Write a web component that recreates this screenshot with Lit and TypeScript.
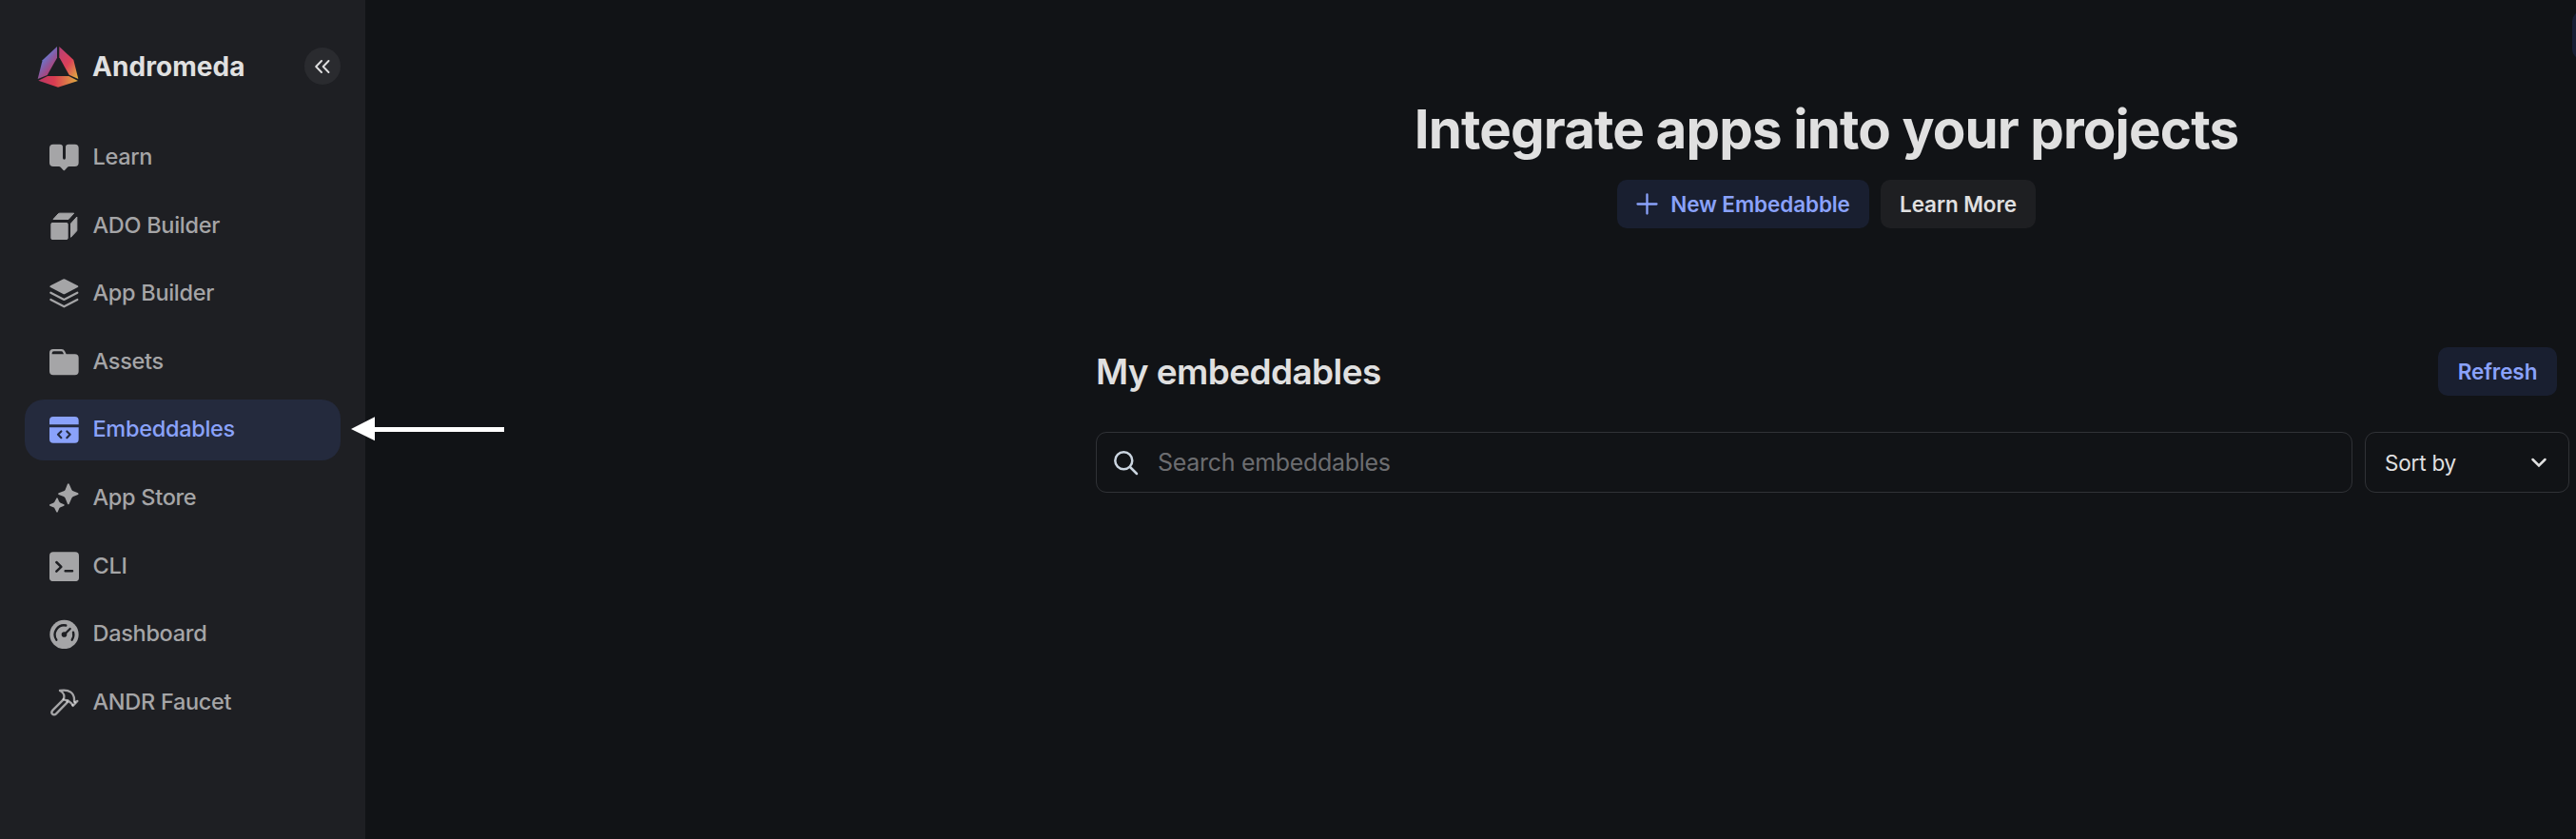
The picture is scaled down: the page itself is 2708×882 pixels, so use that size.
import { LitElement, html, css, svg } from "lit";
import { customElement } from "lit/decorators.js";

const icons = {
  learn: svg`<path fill="currentColor" d="M12 5h20q6 0 9 4q1 2 1 6v33q0 5 4.500 5t4.500-5v-33q0-4 1-6q3-4 9-4h19q12 0 12 12v46q0 12-12 12H62q-3 0-5 2l-9 10q-2 2-4 0l-9-10q-2-2-5-2H12q-12 0-12-12V17q0-12 12-12z"/>`,
  ado: svg`<g fill="currentColor" stroke="currentColor" stroke-width="3" stroke-linejoin="round"><rect x="5.500" y="37.500" width="52" height="51" rx="3"/><path d="M12 25.500 27 9q2-2.500 5-2.500h45L60 25.500zM67.500 39 86.500 18v42q0 2-2 4L67.500 82z"/></g>`,
  app: svg`<path fill="currentColor" d="M43 1.500q3-1.500 6 0L89 22q4 2.500 0 5L49 48q-3 1.500-6 0L3 27q-4-2.500 0-5z"/><path fill="none" stroke="currentColor" stroke-width="6.500" stroke-linecap="round" stroke-linejoin="round" d="m4 44 42 22 42-22M4 66l42 22 42-22"/>`,
  assets: svg`<path fill="currentColor" fill-rule="evenodd" d="M12 6h26q7 0 10 6l5 10h27q12 0 12 12v42q0 12-12 12H12Q0 88 0 76V18Q0 6 12 6zm2 7q-6 0-6 6v3h37l-2-5q-2-4-6-4z"/>`,
  embed: svg`<path fill="currentColor" fill-rule="evenodd" d="M12 6h68q12 0 12 12v13H0V18Q0 6 12 6zM0 40h92v37q0 12-12 12H12Q0 89 0 77z"/><path fill="none" stroke="#242a3d" stroke-width="6.500" stroke-linecap="round" stroke-linejoin="round" d="M37 52.500 27 62.500l10 10M55 52.500l10 10-10 10"/>`,
  store: svg`<path fill="currentColor" d="M57 2q3-3 5 0L70 20q1.500 3 5 4.500L90 31q3 2.500 0 5L75 42q-3.500 1.500-5 5L62 65q-2.500 3-5 0L50 47q-1.500-3.500-5-5L29 36q-3-2.500 0-5L45 24.500q3.500-1.500 5-4.500zM22 47q2-2 4 0L30 57q2 4 5 5L46 67q2 2 0 4L35 76q-3 1-5 5L26 91q-2 2-4 0L17 81q-1-4-5-5L1 71q-2-2 0-4L12 62q4-1 5-5z"/>`,
  cli: svg`<rect width="93" height="93" rx="12" fill="currentColor" y=".5"/><path fill="none" stroke="#1e1f23" stroke-width="7.500" stroke-linecap="round" stroke-linejoin="round" d="m22 33 15 14.500L22 62M50 61h22"/>`,
  dash: svg`<circle cx="46.500" cy="48" r="45.500" fill="currentColor"/><g fill="none" stroke="#1e1f23" stroke-width="7" stroke-linecap="round"><path d="M22 65A29.500 29.500 0 0 1 52 19.500M75 41A29.500 29.500 0 0 1 71 65M50 45 65 30"/></g><circle cx="46.500" cy="48" r="8.500" fill="#1e1f23"/>`,
  faucet: svg`<path fill="none" stroke="currentColor" stroke-width="7" stroke-linecap="round" stroke-linejoin="round" d="M33 9c29-5 47 7 45 33l3 3 7-3-14 15-4-7-12-10M33 9c14 7 15 19 11 28L11 70C1 80 13 90 21 82L56 46M44 37l14 4"/><path fill="none" stroke="#d2d2d3" stroke-width="6" stroke-linecap="round" d="M44 36v1M56 43v1M79 45l2 1M73 54v1"/>`,
};

const nav: [string, unknown][] = [
  ["Learn", icons.learn],
  ["ADO Builder", icons.ado],
  ["App Builder", icons.app],
  ["Assets", icons.assets],
  ["Embeddables", icons.embed],
  ["App Store", icons.store],
  ["CLI", icons.cli],
  ["Dashboard", icons.dash],
  ["ANDR Faucet", icons.faucet],
];

@customElement("app-root")
export class AppRoot extends LitElement {
  static styles = css`
    :host {
      display: flex;
      position: relative;
      width: 100%;
      height: 882px;
      overflow: hidden;
      background: #111316;
      color: #e0e0e0;
      font-family: Inter, sans-serif;
    }
    * { box-sizing: border-box; }
    svg { display: block; flex: none; }
    .side {
      flex: none;
      width: 384px;
      padding: 50px 26px 0;
      background: #1e1f23;
    }
    .brand { display: flex; align-items: center; height: 39px; padding-left: 13px; margin-bottom: 44.600px; }
    .name { flex: 1; margin-left: 14px; padding-top: 1px; font-size: 28px; font-weight: 700; line-height: 39px; letter-spacing: .05px; }
    .collapse {
      display: grid; place-items: center;
      width: 38.500px; height: 39px; border-radius: 50%; background: #2a2b2f;
    }
    .nav { display: flex; flex-direction: column; gap: 7.600px; }
    .item {
      display: flex; align-items: center; gap: 14.500px;
      height: 64px; padding-left: 26px; border-radius: 20px;
      color: #a5a5a7; font-size: 23.500px; font-weight: 500; letter-spacing: -.3px;
    }
    .item span { margin-top: -2px; }
    .active { background: #242a3d; color: #8aa2fb; }
    .main { flex: 1; min-width: 0; padding: 102px 20px 0 768px; }
    .title { margin: 0; height: 87px; line-height: 68px; text-align: center; font-size: 56.500px; font-weight: 700; letter-spacing: -.880px; white-space: nowrap; }
    .row { display: flex; justify-content: center; gap: 12px; }
    .btn {
      display: flex; align-items: center; justify-content: center;
      height: 51px; border-radius: 10px;
      font-size: 22.500px; font-weight: 600; letter-spacing: -.1px; white-space: nowrap;
      background: #1e1f22;
    }
    .blue { background: #191f30; color: #8aa2fb; }
    .new { width: 265px; gap: 13px; }
    .more { width: 163px; }
    .refresh { width: 125px; }
    .head { display: flex; align-items: center; justify-content: space-between; margin-top: 125px; }
    .sub { margin: 0; font-size: 37px; line-height: 51px; font-weight: 600; letter-spacing: -.6px; }
    .filters { display: flex; gap: 13px; margin: 38px -13px 0 0; }
    .box {
      display: flex; align-items: center; height: 64px;
      border: 1px solid #303236; border-radius: 11px;
    }
    .search { flex: 1; padding-left: 17px; gap: 20px; font-size: 25px; letter-spacing: -.3px; color: #6c6d70; }
    .sort { width: 215px; padding: 0 22px 0 20px; justify-content: space-between; font-size: 22.500px; letter-spacing: -.2px; }
    .arrow { position: absolute; left: 369px; top: 438px; }
    .edge { position: absolute; left: 2704px; top: 12px; width: 60px; height: 50px; border-radius: 10px; background: #191f35; }
  `;

  render() {
    return html`
      <aside class="side">
        <div class="brand">
          <svg width="44" height="44" viewBox="117 84 132 132">
            <defs>
              <linearGradient id="l" x1=".2" y1=".3" x2=".65" y2=".9"><stop stop-color="#6080dc"/><stop offset=".5" stop-color="#8a5aa0"/><stop offset="1" stop-color="#bd3968"/></linearGradient>
              <linearGradient id="r" x1=".1" y1="0" x2=".9" y2="1"><stop stop-color="#b94075"/><stop offset=".5" stop-color="#dd4058"/><stop offset="1" stop-color="#e0ae40"/></linearGradient>
              <linearGradient id="b"><stop stop-color="#b93765"/><stop offset=".4" stop-color="#d93c51"/><stop offset="1" stop-color="#dfad40"/></linearGradient>
            </defs>
            <path fill="url(#l)" d="M180 87v35l-31 55-30 12 15-59z"/>
            <path fill="url(#r)" d="m187 87 45 42 15 60-29-13-31-55z"/>
            <path fill="url(#b)" d="m121 194 29-14h67l29 15-63 20z"/>
          </svg>
          <span class="name">Andromeda</span>
          <span class="collapse">
            <svg width="16" height="14" viewBox="0 0 16 14" fill="none" stroke="#dededf" stroke-width="1.900" stroke-linecap="round" stroke-linejoin="round"><path d="M7 1 1.200 7 7 13M14.500 1 8.700 7l5.800 6"/></svg>
          </span>
        </div>
        <nav class="nav">
          ${nav.map(([label, icon]) => html`
            <div class="item ${label === "Embeddables" ? "active" : ""}">
              <svg width="31" height="31" viewBox="0 0 93 93">${icon}</svg>
              <span>${label}</span>
            </div>`)}
        </nav>
      </aside>
      <main class="main">
        <h1 class="title">Integrate apps into your projects</h1>
        <div class="row">
          <div class="btn blue new">
            <svg width="23" height="23" viewBox="0 0 23 23" fill="none" stroke="currentColor" stroke-width="2.300" stroke-linecap="round"><path d="M11.500 1.500v20M1.500 11.500h20"/></svg>
            <span>New Embedabble</span>
          </div>
          <div class="btn more">Learn More</div>
        </div>
        <div class="head">
          <h2 class="sub">My embeddables</h2>
          <div class="btn blue refresh">Refresh</div>
        </div>
        <div class="filters">
          <div class="box search">
            <svg width="27" height="27" viewBox="0 0 27 27" fill="none" stroke="#cbd5e0" stroke-width="2.500" stroke-linecap="round"><circle cx="11.300" cy="11.300" r="9"/><path d="m18 18 7 7"/></svg>
            <span>Search embeddables</span>
          </div>
          <div class="box sort">
            <span>Sort by</span>
            <svg width="18" height="12" viewBox="0 0 18 12" fill="none" stroke="#e0e0e0" stroke-width="2.500" stroke-linecap="round"><path d="m2.500 3 6.500 6.500L15.500 3"/></svg>
          </div>
        </div>
      </main>
      <svg class="arrow" width="161" height="26" viewBox="0 0 161 26" fill="#fff"><path d="M0 13 25 .300V11h136v5H25v9.300z"/></svg>
      <div class="edge"></div>
    `;
  }
}
